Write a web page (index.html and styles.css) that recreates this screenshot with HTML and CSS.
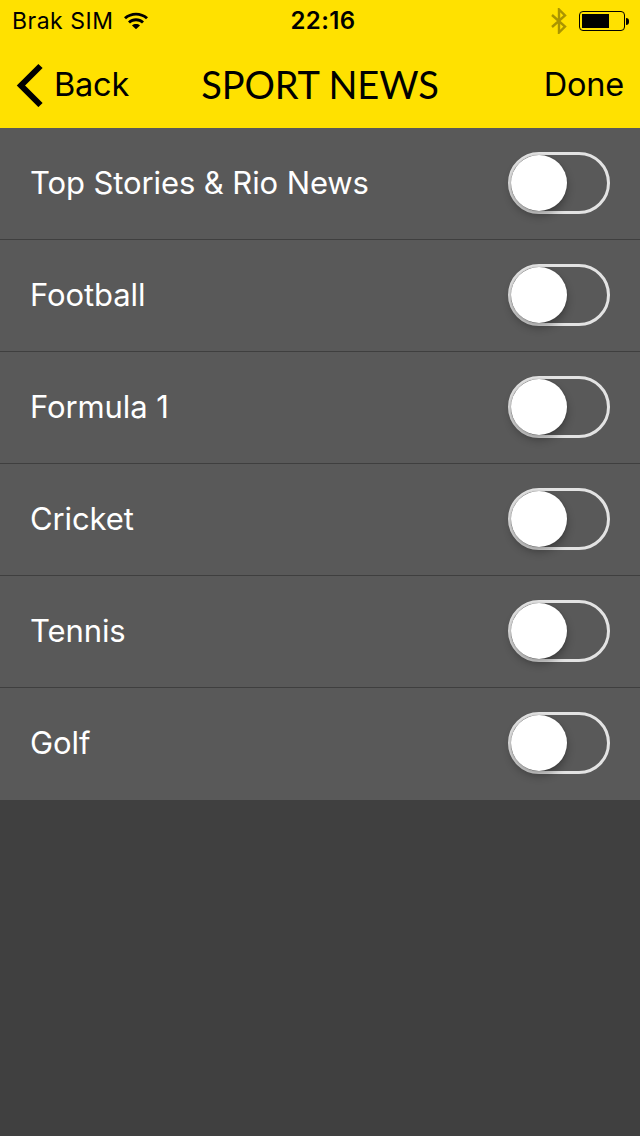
FILE: index.html
```html
<!DOCTYPE html>
<html lang="en">
<head>
<meta charset="utf-8">
<title>Sport News</title>
<link rel="stylesheet" href="styles.css">
</head>
<body>
<header class="top">
  <div class="status">
    <div class="status-left">
      <span class="carrier">Brak SIM</span>
      <svg class="wifi" width="26" height="18" viewBox="0 0 26 18"><path d="M1 6.200C7.600 .2 18.400 .2 25 6.200L23 8.300C17.400 3.400 8.600 3.400 3 8.300Z M5 10.400C9.600 6.300 16.400 6.300 21 10.400L19 12.500C15.400 9.500 10.600 9.500 7 12.500Z M9 14.400C11.300 12.500 14.700 12.500 17 14.400L13 18.200Z" fill="#000"/></svg>
    </div>
    <span class="time">22:16</span>
    <div class="status-right">
      <svg class="bt" width="18" height="26" viewBox="0 0 18 26"><path d="M2 7L15 18.500L9 24.500V1.500L15 7.500L2 19" fill="none" stroke="#ab9500" stroke-width="2.400"/></svg>
      <div class="battery"><div class="battery-level"></div></div>
      <div class="battery-cap"></div>
    </div>
  </div>
  <nav class="nav">
    <div class="back">
      <svg class="chevron" width="28" height="44" viewBox="0 0 28 44"><path d="M24.500 3L5 22.500L24.500 42" fill="none" stroke="#000" stroke-width="6"/></svg>
      <span class="nav-btn">Back</span>
    </div>
    <span class="title">SPORT NEWS</span>
    <span class="nav-btn done">Done</span>
  </nav>
</header>
<main class="list">
  <div class="row"><span class="label">Top Stories &amp; Rio News</span><span class="toggle"><span class="knob"></span></span></div>
  <div class="row"><span class="label">Football</span><span class="toggle"><span class="knob"></span></span></div>
  <div class="row"><span class="label">Formula 1</span><span class="toggle"><span class="knob"></span></span></div>
  <div class="row"><span class="label">Cricket</span><span class="toggle"><span class="knob"></span></span></div>
  <div class="row"><span class="label">Tennis</span><span class="toggle"><span class="knob"></span></span></div>
  <div class="row"><span class="label">Golf</span><span class="toggle"><span class="knob"></span></span></div>
</main>
</body>
</html>
```
FILE: styles.css
```css
* { box-sizing: border-box; }
html, body { margin: 0; height: 100%; }
body {
  width: 640px;
  height: 1136px;
  background: #404040;
  font-family: Inter, Roboto, "Liberation Sans", sans-serif;
  overflow: hidden;
}
.top {
  height: 128px;
  background: #ffe100;
  color: #000;
  display: flex;
  flex-direction: column;
}
.status {
  height: 40px;
  padding: 0 12px 0 12px;
  display: grid;
  grid-template-columns: 1fr auto 1fr;
  align-items: center;
}
.status-left { display: flex; align-items: center; gap: 10px; }
.carrier { font-size: 23px; line-height: 42px; letter-spacing: 0.5px; }
.wifi { margin-top: -3px; }
.time { font-size: 24px; font-weight: 600; line-height: 42px; letter-spacing: 0.4px; padding-left: 6px; }
.status-right { display: flex; align-items: center; justify-content: flex-end; }
.bt { margin-right: 11px; }
.battery {
  width: 46px;
  height: 20px;
  border: 1.500px solid #000;
  border-radius: 4px;
  padding: 2px;
}
.battery-level { width: 27px; height: 100%; background: #000; }
.battery-cap { width: 3px; height: 7px; background: #000; border-radius: 0 3px 3px 0; margin-left: 1px; margin-right: -1px; }
.nav {
  height: 88px;
  padding: 0 16px;
  display: grid;
  grid-template-columns: 1fr auto 1fr;
  align-items: center;
}
.back { display: flex; align-items: center; gap: 10px; }
.nav-btn { font-size: 32.500px; letter-spacing: -0.2px; line-height: 90px; }
.done { justify-self: end; }
.title {
  font-family: Lato, "Open Sans", sans-serif;
  font-size: 38px;
  letter-spacing: -0.1px;
  line-height: 44px;
  margin-top: -2px;
}
.list { display: flex; flex-direction: column; }
.row {
  height: 112px;
  background: #595959;
  border-bottom: 1px solid #3f3f3f;
  padding: 0 30px 1px 30px;
  display: flex;
  align-items: center;
  justify-content: space-between;
}
.row:last-child { border-bottom: 0; padding-bottom: 2px; }
.label { color: #fff; font-size: 31px; letter-spacing: -0.1px; line-height: 36px; margin-top: -1px; }
.toggle {
  width: 102px;
  height: 62px;
  border: 3px solid #e3e3e3;
  border-radius: 31px;
  position: relative;
}
.knob {
  position: absolute;
  left: 0;
  top: 0;
  width: 56px;
  height: 56px;
  border-radius: 50%;
  background: #fff;
  box-shadow: 0 5px 8px rgba(0,0,0,.3), 0 0 2px rgba(0,0,0,.2);
}
```
